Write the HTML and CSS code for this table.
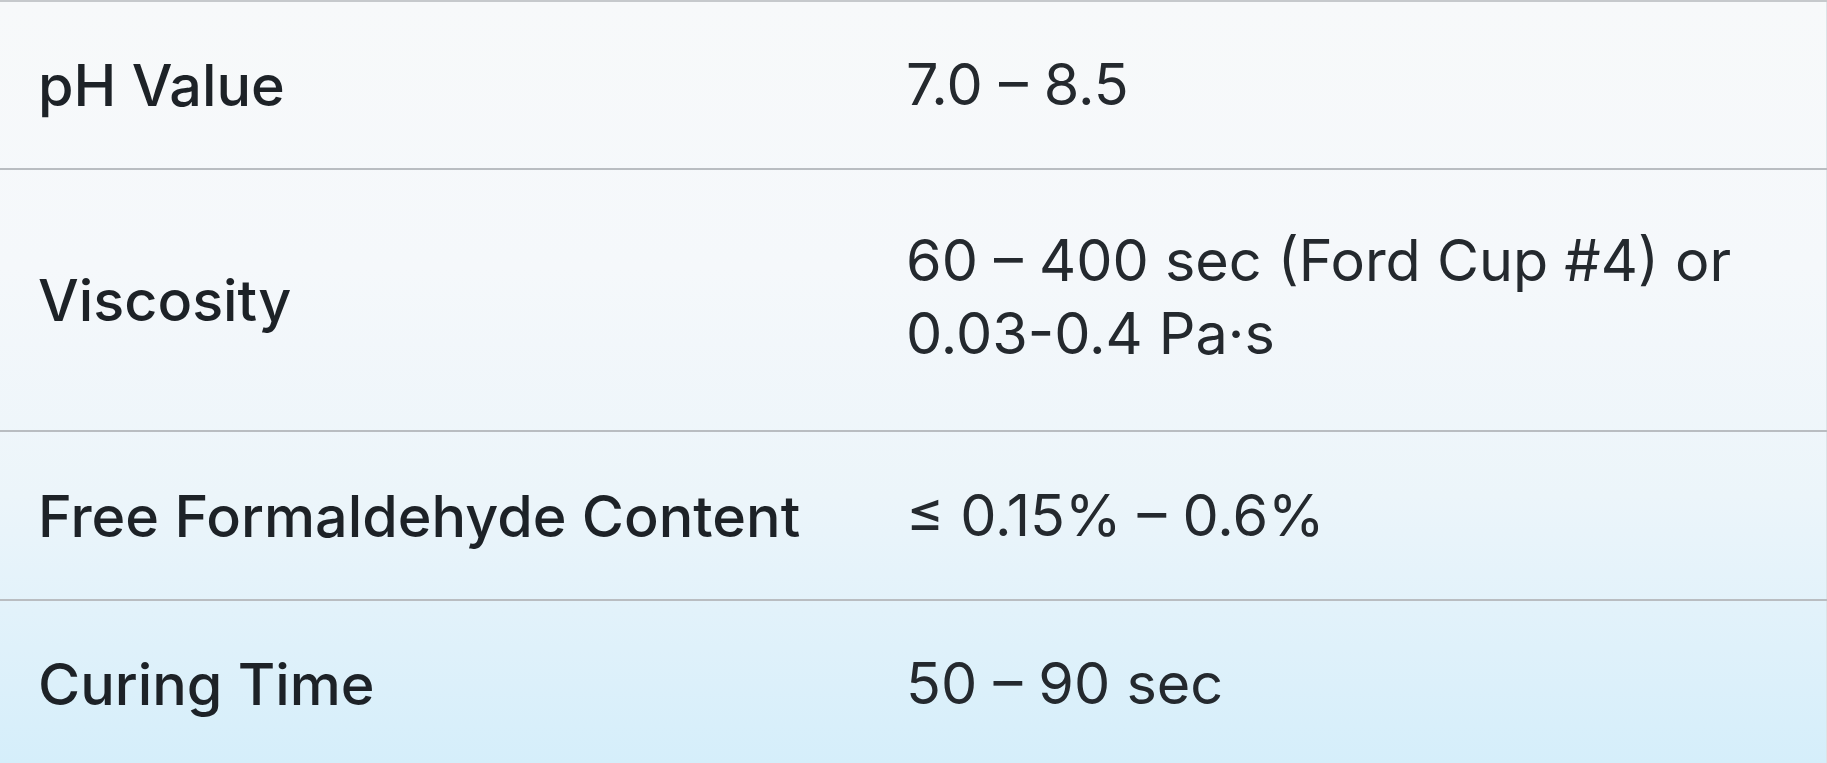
FILE: index.html
```html
<!DOCTYPE html>
<html lang="en">
<head>
<meta charset="utf-8">
<title>Specifications</title>
<link rel="stylesheet" href="styles.css">
</head>
<body>
<table class="spec">
  <tbody>
    <tr class="row row-first">
      <td class="label">pH Value</td>
      <td class="value">7.0 – 8.5</td>
    </tr>
    <tr class="row row-tall">
      <td class="label">Viscosity</td>
      <td class="value value-lift">60 – 400 sec (Ford Cup #4) or 0.03-0.4 Pa·s</td>
    </tr>
    <tr class="row row-third">
      <td class="label">Free Formaldehyde Content</td>
      <td class="value">≤ 0.15% – 0.6%</td>
    </tr>
    <tr class="row">
      <td class="label">Curing Time</td>
      <td class="value">50 – 90 sec</td>
    </tr>
  </tbody>
</table>
</body>
</html>
```

FILE: styles.css
```css
html, body {
  margin: 0;
  padding: 0;
}
body {
  width: 1827px;
  height: 763px;
  overflow: hidden;
  background: linear-gradient(180deg, #f7f9fa 0%, #f5f8fb 35%, #ecf5fa 65%, #d5eefa 100%);
  font-family: Inter, "Noto Sans", sans-serif;
  color: #1d2227;
}
.spec {
  width: 1827px;
  border-collapse: collapse;
  border-top: 2px solid #c6c9cc;
  border-right: 1px solid #dde2e6;
}
.row {
  height: 168px;
  border-bottom: 2px solid #b9bdc1;
}
.row-tall {
  height: 262px;
}
.row-third {
  height: 169px;
}
.label {
  width: 868px;
  padding: 0 0 0 38px;
  font-size: 57.5px;
  font-weight: 500;
  vertical-align: middle;
}
.value {
  padding: 0 40px 0 0;
  font-size: 57.5px;
  font-weight: 400;
  color: #24292e;
  vertical-align: middle;
  line-height: 1.27;
}
.value-lift {
  padding-bottom: 6px;
}
```
